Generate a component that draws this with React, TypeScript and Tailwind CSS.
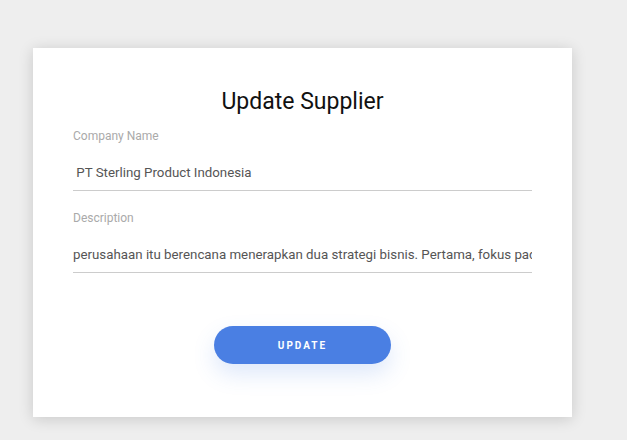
import React from "react";

// Simple supplier edit card
function Field({ label, value }: { label: string; value: string }) {
  return (
    <div className="flex flex-col">
      <label className="text-[12px] leading-[16px] text-[#aaaaaa]">{label}</label>
      <input
        type="text"
        defaultValue={value}
        className="w-full pt-[19px] pb-[7px] text-[13.3px] leading-[20px] text-[#555555] border-b border-[#cccccc] outline-none bg-transparent"
      />
    </div>
  );
}

export default function App() {
  return (
    <div
      className="min-h-[440px] w-full bg-[#eeeeee] pt-[48px] pl-[33px]"
      style={{ fontFamily: "Roboto, 'Liberation Sans', sans-serif" }}
    >
      <div className="w-[539px] h-[369px] bg-white shadow-[0_2px_14px_rgba(0,0,0,0.16)] px-10 pt-10">
        <h1 className="text-center text-[23px] leading-[28px] text-[#111111]">Update Supplier</h1>

        <div className="mt-3 flex flex-col gap-[19px]">
          <Field label="Company Name" value=" PT Sterling Product Indonesia" />
          <Field
            label="Description"
            value="perusahaan itu berencana menerapkan dua strategi bisnis. Pertama, fokus pada pengembangan produk"
          />
        </div>

        <div className="mt-[53px] flex justify-center">
          <button className="w-[177px] h-[38px] rounded-full bg-[#4a7fe3] text-white text-[10px] font-bold tracking-[2px] shadow-[0_10px_22px_rgba(74,127,227,0.18)]">
            UPDATE
          </button>
        </div>
      </div>
    </div>
  );
}
